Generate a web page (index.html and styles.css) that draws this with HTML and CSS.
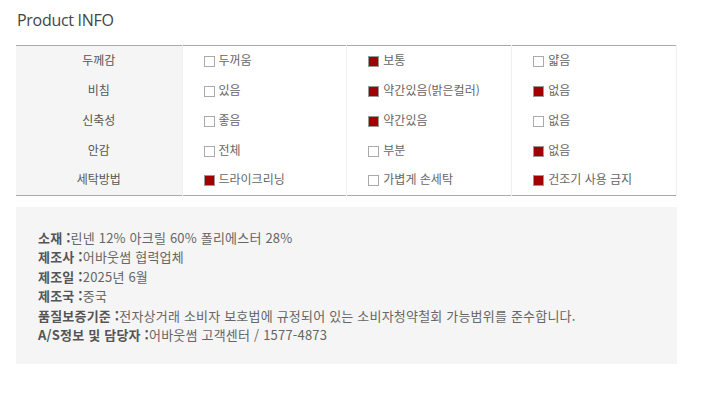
FILE: index.html
```html
<!DOCTYPE html>
<html lang="ko">
<head>
<meta charset="utf-8">
<link rel="stylesheet" href="styles.css">
</head>
<body>
<div class="wrap">
  <h2 class="title">Product INFO</h2>
  <table class="spec">
    <tr>
      <th>두께감</th>
      <td><span class="cb"></span>두꺼움</td>
      <td><span class="cb on"></span>보통</td>
      <td><span class="cb"></span>얇음</td>
    </tr>
    <tr>
      <th>비침</th>
      <td><span class="cb"></span>있음</td>
      <td><span class="cb on"></span>약간있음(밝은컬러)</td>
      <td><span class="cb on"></span>없음</td>
    </tr>
    <tr>
      <th>신축성</th>
      <td><span class="cb"></span>좋음</td>
      <td><span class="cb on"></span>약간있음</td>
      <td><span class="cb"></span>없음</td>
    </tr>
    <tr>
      <th>안감</th>
      <td><span class="cb"></span>전체</td>
      <td><span class="cb"></span>부분</td>
      <td><span class="cb on"></span>없음</td>
    </tr>
    <tr>
      <th>세탁방법</th>
      <td><span class="cb on"></span>드라이크리닝</td>
      <td><span class="cb"></span>가볍게 손세탁</td>
      <td><span class="cb on"></span>건조기 사용 금지</td>
    </tr>
  </table>
  <div class="info">
    <p><b>소재 :</b>린넨 12% 아크릴 60% 폴리에스터 28%</p>
    <p><b>제조사 :</b>어바웃썸 협력업체</p>
    <p><b>제조일 :</b>2025년 6월</p>
    <p><b>제조국 :</b>중국</p>
    <p><b>품질보증기준 :</b>전자상거래 소비자 보호법에 규정되어 있는 소비자청약철회 가능범위를 준수합니다.</p>
    <p><b>A/S정보 및 담당자 :</b>어바웃썸 고객센터 / 1577-4873</p>
  </div>
</div>
</body>
</html>
```
FILE: styles.css
```css
* { box-sizing: border-box; }
body {
  margin: 0;
  background: #fff;
  font-family: "Noto Sans CJK KR", "Noto Sans", sans-serif;
  color: #666;
}
.wrap {
  width: 693px;
  padding: 0 16px;
}
.title {
  margin: 0;
  padding-top: 9px;
  height: 45px;
  font-family: "Open Sans", "Noto Sans", sans-serif;
  font-weight: 400;
  font-size: 16px;
  line-height: 22px;
  color: #444;
  padding-left: 1px;
  letter-spacing: -0.3px;
}
.spec {
  width: 661px;
  border-collapse: collapse;
  table-layout: fixed;
  border-top: 1px solid #aaa;
  border-bottom: 1px solid #aaa;
  font-size: 12px;
}
.spec tr { height: 30px; }
.spec th {
  width: 166px;
  background: #f5f5f5;
  font-weight: 400;
  color: #555;
  text-align: center;
  padding: 0 0 3px;
  border-right: 1px solid #f0f0f0;
}
.spec td {
  padding: 0 0 3px 21px;
  color: #666;
  border-right: 1px solid #f0f0f0;
  white-space: nowrap;
}
.cb {
  display: inline-block;
  width: 11px;
  height: 11px;
  border: 1px solid #aaa;
  background: #fff;
  vertical-align: -2px;
  margin-right: 4px;
}
.cb.on { background: #a00000; border-color: #999; }
.info {
  margin-top: 11px;
  width: 661px;
  background: #f5f5f5;
  padding: 21px 22px 20px;
  font-size: 13px;
  letter-spacing: 0.2px;
  color: #666;
}
.info p {
  margin: 0;
  line-height: 19.4px;
}
.info b {
  color: #555;
  font-weight: 700;
}
```
